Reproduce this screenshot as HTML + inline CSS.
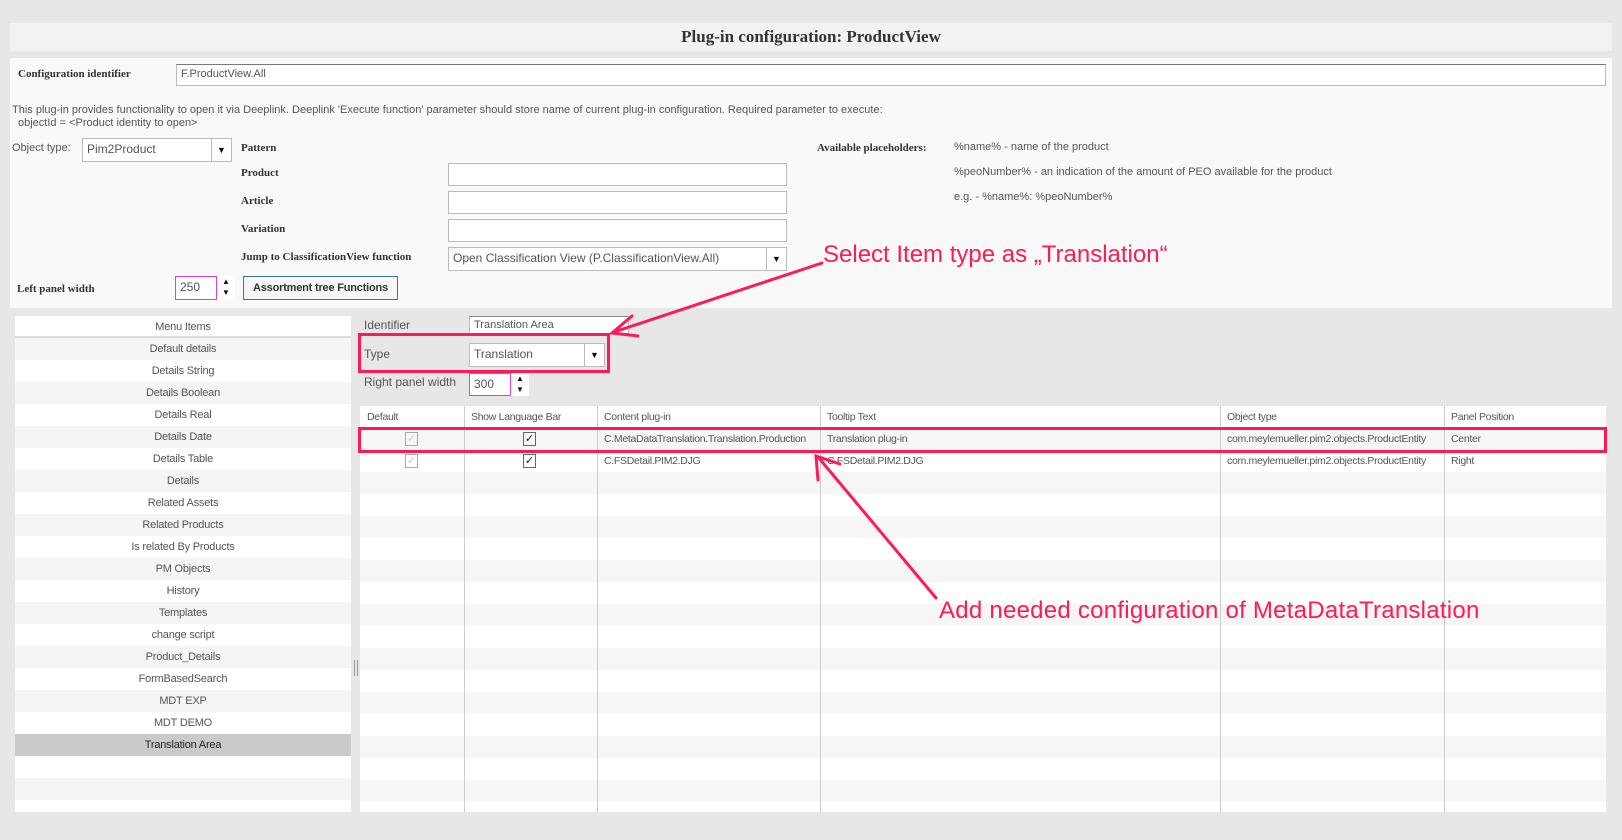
<!DOCTYPE html>
<html><head><meta charset="utf-8"><style>
*{box-sizing:border-box;margin:0;padding:0}
body{width:1622px;height:840px;background:#e7e7e7;font-family:"Liberation Sans",sans-serif;font-size:11px;color:#555;position:relative;overflow:hidden}
.a{position:absolute}
.serif{font-family:"Liberation Serif",serif;font-weight:bold;color:#333;font-size:11px;letter-spacing:0}
.inp{position:absolute;background:#fff;border:1px solid #bbb;font-size:11px;padding:3px 4px;color:#555}
.sel .ar{position:absolute;right:0;top:0;bottom:0;width:20px;border-left:1px solid #bbb;text-align:center;font-size:9px;color:#111;line-height:20px}
.row{position:absolute;left:0;width:100%;height:22px;text-align:center;line-height:22px;color:#555;letter-spacing:-0.2px}
.ann{position:absolute;color:#ff1a55;font-size:24px;font-family:"Liberation Sans Narrow","Liberation Sans",sans-serif;white-space:nowrap;letter-spacing:0}
.cell{position:absolute;font-size:10.5px;color:#555;white-space:nowrap;letter-spacing:-0.3px}
</style></head><body>
<div class="a" style="left:10px;top:23px;width:1602px;height:28px;background:#f2f2f2"></div>
<div class="a serif" style="left:10px;top:23px;width:1602px;height:28px;line-height:28px;text-align:center;font-size:17px">Plug-in configuration: ProductView</div>

<div class="a" style="left:10px;top:58px;width:1602px;height:250px;background:#f9f9f9"></div>
<div class="a serif" style="left:18px;top:68px">Configuration identifier</div>
<div class="inp" style="left:176px;top:64px;width:1430px;height:22px;border-top:1px solid #777">F.ProductView.All</div>
<div class="a" style="left:12px;top:104px">This plug-in provides functionality to open it via Deeplink. Deeplink 'Execute function' parameter should store name of current plug-in configuration. Required parameter to execute:</div>
<div class="a" style="left:18px;top:117px">objectId = &lt;Product identity to open&gt;</div>
<div class="a" style="left:12px;top:142px">Object type:</div>
<div class="inp sel" style="left:82px;top:138px;width:150px;height:24px;font-size:12px">Pim2Product<div class="ar" style="line-height:22px">▼</div></div>
<div class="a serif" style="left:241px;top:142px">Pattern</div>
<div class="a serif" style="left:241px;top:167px">Product</div>
<div class="inp" style="left:448px;top:163px;width:339px;height:23px"></div>
<div class="a serif" style="left:241px;top:195px">Article</div>
<div class="inp" style="left:448px;top:191px;width:339px;height:23px"></div>
<div class="a serif" style="left:241px;top:223px">Variation</div>
<div class="inp" style="left:448px;top:219px;width:339px;height:23px"></div>
<div class="a serif" style="left:241px;top:251px">Jump to ClassificationView function</div>
<div class="inp sel" style="left:448px;top:247px;width:339px;height:24px;font-size:12px">Open Classification View (P.ClassificationView.All)<div class="ar" style="line-height:22px">▼</div></div>
<div class="a serif" style="left:17px;top:283px">Left panel width</div>
<div class="inp" style="left:175px;top:276px;width:42px;height:24px;border:1px solid #e040e0;font-size:12px">250</div>
<div class="a" style="left:217px;top:276px;width:18px;height:24px;background:#fff;font-size:8px;color:#111;text-align:center;line-height:11px">▲<br>▼</div>
<div class="a" style="left:243px;top:276px;width:155px;height:24px;border:1px solid #3a7a7a;background:#f6f6f6;text-align:center;line-height:22px;font-weight:bold;color:#333;letter-spacing:-0.2px">Assortment tree Functions</div>
<div class="a serif" style="left:817px;top:142px">Available placeholders:</div>
<div class="a" style="left:954px;top:141px">%name% - name of the product</div>
<div class="a" style="left:954px;top:166px">%peoNumber% - an indication of the amount of PEO available for the product</div>
<div class="a" style="left:954px;top:191px">e.g. - %name%: %peoNumber%</div>

<div class="a" style="left:15px;top:316px;width:336px;height:496px;background:#fff">
<div class="row" style="top:0;border-bottom:2px solid #ddd">Menu Items</div>
<div style="position:absolute;top:22px;left:0;width:100%">
<div class="row" style="top:0;background:#f5f5f5">Default details</div>
<div class="row" style="top:22px">Details String</div>
<div class="row" style="top:44px;background:#f5f5f5">Details Boolean</div>
<div class="row" style="top:66px">Details Real</div>
<div class="row" style="top:88px;background:#f5f5f5">Details Date</div>
<div class="row" style="top:110px">Details Table</div>
<div class="row" style="top:132px;background:#f5f5f5">Details</div>
<div class="row" style="top:154px">Related Assets</div>
<div class="row" style="top:176px;background:#f5f5f5">Related Products</div>
<div class="row" style="top:198px">Is related By Products</div>
<div class="row" style="top:220px;background:#f5f5f5">PM Objects</div>
<div class="row" style="top:242px">History</div>
<div class="row" style="top:264px;background:#f5f5f5">Templates</div>
<div class="row" style="top:286px">change script</div>
<div class="row" style="top:308px;background:#f5f5f5">Product_Details</div>
<div class="row" style="top:330px">FormBasedSearch</div>
<div class="row" style="top:352px;background:#f5f5f5">MDT EXP</div>
<div class="row" style="top:374px">MDT DEMO</div>
<div class="row" style="top:396px;background:#cacaca;color:#222">Translation Area</div>
<div class="row" style="top:440px;background:#f5f5f5"></div>
</div></div>
<div class="a" style="left:354px;top:660px;width:4px;height:16px;border-left:1px solid #999;border-right:1px solid #999"></div>

<div class="a" style="left:364px;top:318px;font-size:12px">Identifier</div>
<div class="inp" style="left:469px;top:316px;width:160px;height:18px;padding:2px 4px;border-top:1px solid #888">Translation Area</div>
<div class="a" style="left:364px;top:347px;font-size:12px">Type</div>
<div class="inp sel" style="left:469px;top:343px;width:136px;height:24px;font-size:12px">Translation<div class="ar" style="line-height:22px">▼</div></div>
<div class="a" style="left:358px;top:333px;width:252px;height:40px;border:3px solid #ff1a55"></div>
<div class="a" style="left:364px;top:375px;font-size:12px">Right panel width</div>
<div class="inp" style="left:469px;top:373px;width:42px;height:23px;border:1px solid #e040e0;font-size:12px">300</div>
<div class="a" style="left:511px;top:373px;width:18px;height:23px;background:#fff;font-size:8px;color:#111;text-align:center;line-height:11px">▲<br>▼</div>

<div class="a" style="left:360px;top:406px;width:1246px;height:406px;background:#fff;overflow:hidden">
<div class="a" style="left:0;top:66px;width:100%;height:22px;background:#f6f6f6"></div>
<div class="a" style="left:0;top:110px;width:100%;height:22px;background:#f6f6f6"></div>
<div class="a" style="left:0;top:154px;width:100%;height:22px;background:#f6f6f6"></div>
<div class="a" style="left:0;top:198px;width:100%;height:22px;background:#f6f6f6"></div>
<div class="a" style="left:0;top:242px;width:100%;height:22px;background:#f6f6f6"></div>
<div class="a" style="left:0;top:286px;width:100%;height:22px;background:#f6f6f6"></div>
<div class="a" style="left:0;top:330px;width:100%;height:22px;background:#f6f6f6"></div>
<div class="a" style="left:0;top:374px;width:100%;height:22px;background:#f6f6f6"></div>
<div class="a" style="left:0;top:22px;width:100%;height:22px;background:#f6f6f6"></div>
<div class="a" style="left:104px;top:0;width:1px;height:406px;background:#ccc"></div>
<div class="a" style="left:237px;top:0;width:1px;height:406px;background:#ccc"></div>
<div class="a" style="left:460px;top:0;width:1px;height:406px;background:#ccc"></div>
<div class="a" style="left:860px;top:0;width:1px;height:406px;background:#ccc"></div>
<div class="a" style="left:1084px;top:0;width:1px;height:406px;background:#ccc"></div>
<div class="cell" style="left:7px;top:5px">Default</div>
<div class="cell" style="left:111px;top:5px">Show Language Bar</div>
<div class="cell" style="left:244px;top:5px">Content plug-in</div>
<div class="cell" style="left:467px;top:5px">Tooltip Text</div>
<div class="cell" style="left:867px;top:5px">Object type</div>
<div class="cell" style="left:1091px;top:5px">Panel Position</div>
<div class="a" style="left:45px;top:26px;width:13px;height:14px;border:1px solid #aaa;color:#ccc;font-size:11px;line-height:12px;text-align:center">✓</div>
<div class="a" style="left:163px;top:26px;width:13px;height:14px;border:1px solid #666;color:#222;font-size:11px;line-height:12px;text-align:center">✓</div>
<div class="cell" style="left:244px;top:27px">C.MetaDataTranslation.Translation.Production</div>
<div class="cell" style="left:467px;top:27px">Translation plug-in</div>
<div class="cell" style="left:867px;top:27px">com.meylemueller.pim2.objects.ProductEntity</div>
<div class="cell" style="left:1091px;top:27px">Center</div>
<div class="a" style="left:45px;top:48px;width:13px;height:14px;border:1px solid #aaa;color:#ccc;font-size:11px;line-height:12px;text-align:center">✓</div>
<div class="a" style="left:163px;top:48px;width:13px;height:14px;border:1px solid #666;color:#222;font-size:11px;line-height:12px;text-align:center">✓</div>
<div class="cell" style="left:244px;top:49px">C.FSDetail.PIM2.DJG</div>
<div class="cell" style="left:467px;top:49px">C.FSDetail.PIM2.DJG</div>
<div class="cell" style="left:867px;top:49px">com.meylemueller.pim2.objects.ProductEntity</div>
<div class="cell" style="left:1091px;top:49px">Right</div>
</div>
<div class="a" style="left:358px;top:427px;width:1249px;height:26px;border:3px solid #ff1a55"></div>

<svg class="a" style="left:0;top:0" width="1622" height="840">
<g stroke="#ff1a55" stroke-width="3" fill="none" stroke-linecap="round">
<line x1="822" y1="263" x2="614" y2="332"/>
<polyline points="632,316 612,333 638,336"/>
<line x1="936" y1="598" x2="818" y2="457"/>
<polyline points="818,480 816,456 840,464"/>
</g></svg>
<div class="ann" style="left:823px;top:241px">Select Item type as „Translation“</div>
<div class="ann" style="left:939px;top:597px;letter-spacing:0.25px">Add needed configuration of MetaDataTranslation</div>
</body></html>
